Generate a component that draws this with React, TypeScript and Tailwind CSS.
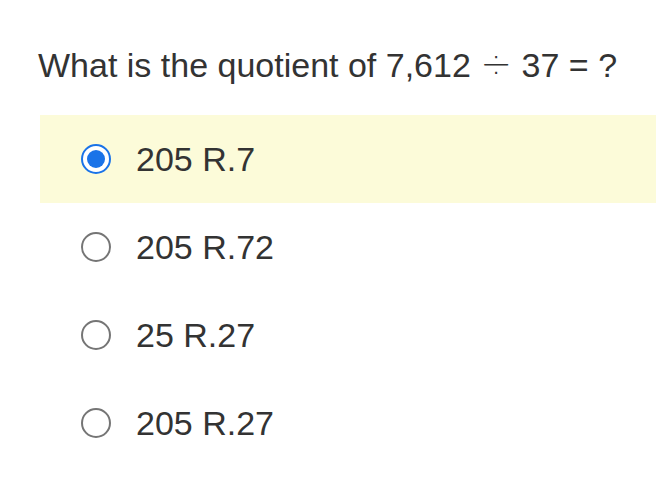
const options = ['205 R.7', '205 R.72', '25 R.27', '205 R.27'];

function Radio({ checked }: { checked: boolean }) {
  if (checked) {
    return (
      <span className="flex h-[30px] w-[30px] items-center justify-center rounded-full border-2 border-[#1a73e8] bg-white">
        <span className="h-[18px] w-[18px] rounded-full bg-[#1a73e8]" />
      </span>
    );
  }
  return <span className="h-[30px] w-[30px] rounded-full border-2 border-[#757575] bg-white" />;
}

export default function App() {
  return (
    <div className="h-[496px] w-[656px] overflow-hidden bg-white font-['Liberation_Sans',Arial,sans-serif] text-[#333333]">
      <h1 className="pl-[38px] pt-[44px] text-[34px] leading-[42px]">
        What is the quotient of 7,612{' '}
        <span className="font-['DejaVu_Sans',sans-serif] text-[38px] font-light leading-none">÷</span> 37 = ?
      </h1>
      <div className="mt-[29px] pl-[40px]">
        {options.map((o, i) => (
          <div
            key={o}
            className={`flex h-[88px] items-center gap-[25px] pl-[41px] ${i === 0 ? 'bg-[#fcfbd9]' : ''}`}
          >
            <Radio checked={i === 0} />
            <span className="text-[34px] leading-none">{o}</span>
          </div>
        ))}
      </div>
    </div>
  );
}
